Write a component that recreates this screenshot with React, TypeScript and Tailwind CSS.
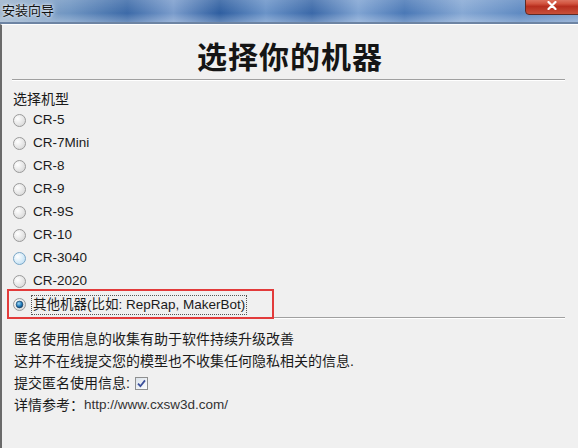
const models = [
  "CR-5",
  "CR-7Mini",
  "CR-8",
  "CR-9",
  "CR-9S",
  "CR-10",
  "CR-3040",
  "CR-2020",
];

const Radio = ({ checked, hover }: { checked?: boolean; hover?: boolean }) => (
  <svg width="13" height="13" viewBox="0 0 13 13" className="shrink-0">
    <defs>
      <radialGradient id={hover ? "rh" : "rn"} cx="0.35" cy="0.35" r="0.8">
        <stop offset="0" stopColor="#ffffff" />
        <stop offset="1" stopColor={hover ? "#b9dcf2" : "#d4d4d4"} />
      </radialGradient>
      <radialGradient id="dot" cx="0.4" cy="0.35" r="0.7">
        <stop offset="0" stopColor="#9fd8f6" />
        <stop offset="0.6" stopColor="#1f78b8" />
        <stop offset="1" stopColor="#0d3f6e" />
      </radialGradient>
    </defs>
    <circle cx="6.5" cy="6.5" r="6" fill={`url(#${hover ? "rh" : "rn"})`} stroke={hover ? "#7aa6c6" : "#9a9a9a"} strokeWidth="1" />
    {checked && <circle cx="6.5" cy="6.5" r="3.4" fill="url(#dot)" stroke="#1b3d5c" strokeWidth="0.6" />}
  </svg>
);

const Checkbox = () => (
  <svg width="13" height="13" viewBox="0 0 13 13" className="shrink-0">
    <defs>
      <linearGradient id="cb" x1="0" y1="0" x2="1" y2="1">
        <stop offset="0" stopColor="#d9e1ea" />
        <stop offset="1" stopColor="#ffffff" />
      </linearGradient>
    </defs>
    <rect x="0.5" y="0.5" width="12" height="12" fill="url(#cb)" stroke="#8e8f8f" />
    <path d="M3 6.6 L5.4 9.2 L10 3.4" fill="none" stroke="#3b4f9a" strokeWidth="1.8" />
  </svg>
);

const App = () => {
  return (
    <div
      className="w-[578px] h-[448px] overflow-hidden bg-[#f0f0f0] relative flex flex-col text-[#1a1a1a]"
      style={{ fontFamily: '"Liberation Sans", "Noto Sans CJK SC", sans-serif' }}
    >
      {/* title bar */}
      <div className="relative h-[24px] shrink-0 border-b-2 border-[#6d84a3] bg-[linear-gradient(90deg,#9cb3cc_0%,#6f95c2_12%,#3c6aa8_22%,#7a9ccc_30%,#2e5ea0_38%,#6a93c8_46%,#3a68a8_54%,#7fa3d2_62%,#4a78b6_70%,#86a8d4_80%,#5f8ac2_90%,#7c9ecb_100%)]">
        <div className="absolute inset-0 bg-[linear-gradient(180deg,rgba(255,255,255,0.15),rgba(255,255,255,0)_60%,rgba(255,255,255,0.25))]" />
        <span className="absolute left-[2px] top-[2px] text-[13px] leading-[18px] text-[#111] [text-shadow:0_0_6px_#e8f0fa,0_0_3px_#ffffff]">
          安装向导
        </span>
        <div className="absolute left-[525px] top-[-6px] w-[60px] h-[21px] rounded-[4px] border border-[#5e2a25] bg-[linear-gradient(180deg,#e99a8a_0%,#d2543f_45%,#b72e1e_60%,#c8503a_100%)] flex items-start justify-center">
          <svg width="10" height="9" viewBox="0 0 10 9" className="mt-[6px] mr-[6px]">
            <path d="M1.5 1 L8.5 8 M8.5 1 L1.5 8" stroke="#ffffff" strokeWidth="2.2" strokeLinecap="round" />
          </svg>
        </div>
      </div>

      {/* body */}
      <div className="flex-1 border-l-2 border-l-[#6a6a6a] border-t border-t-white">
        <div className="h-[54px] pt-[6px] flex items-center justify-center">
          <h1
            className="text-[30px] leading-none font-bold text-[#151515] tracking-[1px]"
            style={{ fontFamily: '"Noto Sans CJK SC", sans-serif' }}
          >
            选择你的机器
          </h1>
        </div>
        <div className="ml-[10px] w-[553px] border-t border-t-[#a0a0a0] border-b border-b-white" />

        <div className="pl-[11px] mt-[8px]">
          <div className="h-[20px] flex items-center text-[14px]">选择机型</div>
          {models.map((m) => (
            <div key={m} className="h-[23px] flex items-center gap-[7px] text-[13.5px]">
              <Radio hover={m === "CR-3040"} />
              <span>{m}</span>
            </div>
          ))}
          <div className="h-[23px] flex items-center gap-[5px] text-[13.5px]">
            <Radio checked />
            <span className="border border-dotted border-[#555] px-[1px] leading-[18px]">
              其他机器(比如: RepRap, MakerBot)
            </span>
          </div>
        </div>

        <div className="ml-[10px] w-[553px] mt-[1px] border-t border-t-[#a0a0a0] border-b border-b-white" />

        <div className="pl-[12px] mt-[9px] text-[14px]">
          <div className="h-[22px] flex items-center">匿名使用信息的收集有助于软件持续升级改善</div>
          <div className="h-[22px] flex items-center">这并不在线提交您的模型也不收集任何隐私相关的信息.</div>
          <div className="h-[22px] flex items-center gap-[5px]">
            <span>提交匿名使用信息:</span>
            <Checkbox />
          </div>
          <div className="h-[22px] flex items-center">
            <span>详情参考：</span>
            <span className="text-[#333] text-[13.5px]">http://www.cxsw3d.com/</span>
          </div>
        </div>
      </div>

      {/* red annotation box */}
      <div className="absolute left-[7px] top-[289px] w-[267px] h-[30px] border-2 border-[#e23b3b]" />
    </div>
  );
};

export default App;
